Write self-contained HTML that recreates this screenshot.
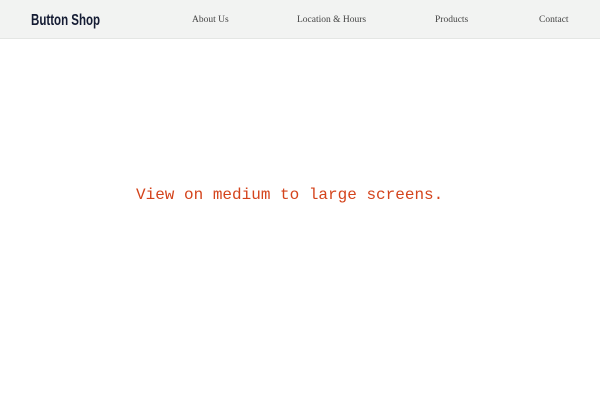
<!DOCTYPE html>
<html><head><meta charset="utf-8"><style>
body{margin:0;width:600px;height:400px;background:#fff;position:relative;overflow:hidden}
.hd{position:absolute;left:0;top:0;width:600px;height:38px;background:#f2f3f2;border-bottom:1px solid #e4e6e4}
.logo{position:absolute;left:31px;top:12px;font:bold 16px "Liberation Sans",sans-serif;color:#141b33;transform:scaleX(0.72);transform-origin:left top;white-space:nowrap}
.nav{position:absolute;top:15px;font:9.5px "Liberation Serif",serif;color:#444}
.msg{position:absolute;left:136px;top:186px;font:16px "Liberation Mono",monospace;color:#d4441c;white-space:nowrap}
</style></head><body>
<div class="hd">
<div class="logo">Button Shop</div>
<div class="nav" style="left:192px">About Us</div>
<div class="nav" style="left:297px">Location &amp; Hours</div>
<div class="nav" style="left:435px">Products</div>
<div class="nav" style="left:539px">Contact</div>
</div>
<div class="msg">View on medium to large screens.</div>
</body></html>
